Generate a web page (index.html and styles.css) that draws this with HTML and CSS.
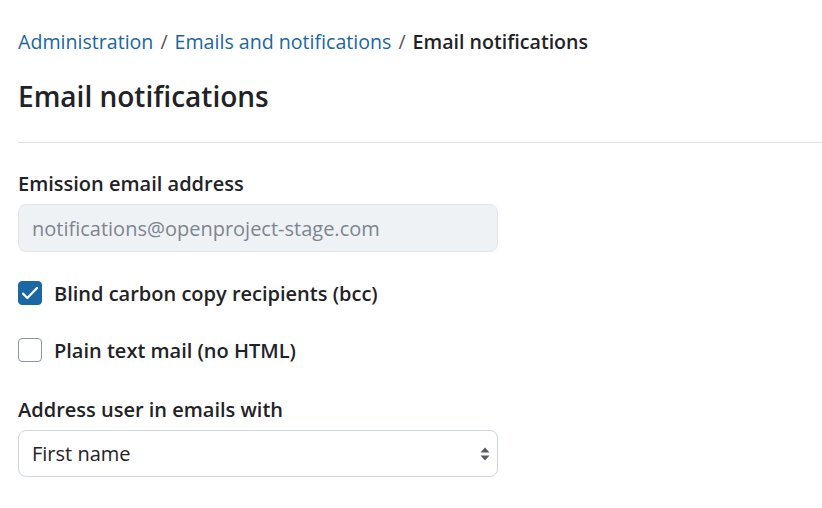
FILE: index.html
```html
<!DOCTYPE html>
<html>
<head>
<meta charset="utf-8">
<link rel="stylesheet" href="styles.css">
</head>
<body>
<div class="page">
  <nav class="breadcrumb">
    <a href="#">Administration</a><span class="sep">/</span><a href="#">Emails and notifications</a><span class="sep">/</span><span class="current">Email notifications</span>
  </nav>
  <h1 class="title">Email notifications</h1>
  <hr class="divider">
  <form class="form">
    <div class="field">
      <label class="label">Emission email address</label>
      <div class="input disabled">notifications@openproject-stage.com</div>
    </div>
    <label class="check">
      <span class="box checked"><svg viewBox="0 0 24 24" width="24" height="24"><path d="M5 12.6l4.4 4.4 9.6-10" fill="none" stroke="#fff" stroke-width="2.2" stroke-linecap="round" stroke-linejoin="round"/></svg></span>
      <span class="check-text">Blind carbon copy recipients (bcc)</span>
    </label>
    <label class="check">
      <span class="box"></span>
      <span class="check-text">Plain text mail (no HTML)</span>
    </label>
    <div class="field">
      <label class="label">Address user in emails with</label>
      <div class="input select">First name
        <svg class="arrows" viewBox="0 0 12 16" width="12" height="16"><path d="M6 1.5L10.5 6.5H1.5Z M6 14.5L1.5 9.5H10.5Z" fill="#555b63"/></svg>
      </div>
    </div>
  </form>
</div>
</body>
</html>
```
FILE: styles.css
```css
html, body { margin: 0; padding: 0; background: #fff; }
body { font-family: "Open Sans", "Noto Sans", sans-serif; color: #1f2328; }
.page { padding: 26px 0 0 18px; }
.breadcrumb { font-size: 19.6px; line-height: 32px; display: flex; align-items: center; }
.breadcrumb a { color: #1a67a3; text-decoration: none; }
.sep { color: #555; margin: 0 7px; }
.current { font-weight: 600; color: #1f2328; }
.title { font-size: 28px; font-weight: 600; margin: 18px 0 0 0; line-height: 40px; }
.divider { border: 0; border-top: 1px solid #dfe2e5; margin: 26px 0 0 0; }
.form { display: flex; flex-direction: column; padding-top: 27px; }
.field { display: flex; flex-direction: column; width: 480px; }
.label { font-size: 20px; font-weight: 600; line-height: 28px; margin-bottom: 6px; }
.input { box-sizing: border-box; height: 48px; border: 1px solid #d0d7de; border-radius: 8px; padding: 0 13px; font-size: 20px; display: flex; align-items: center; position: relative; }
.input.disabled { background: #eff2f5; color: #7d8590; border-color: #e3e7eb; }
.select { justify-content: space-between; padding-right: 6px; height: 47px; }
.check { display: flex; align-items: center; gap: 12px; font-size: 20px; font-weight: 600; margin-top: 28px; height: 26px; }
.check + .check { margin-top: 31px; }
.check + .field { margin-top: 33px; }
.box { box-sizing: border-box; width: 24px; height: 24px; border: 1px solid #8c959f; border-radius: 4px; display: block; }
.box.checked { background: #1a67a3; border-color: #1a67a3; }
.box svg { display: block; margin: -1px; }
```
